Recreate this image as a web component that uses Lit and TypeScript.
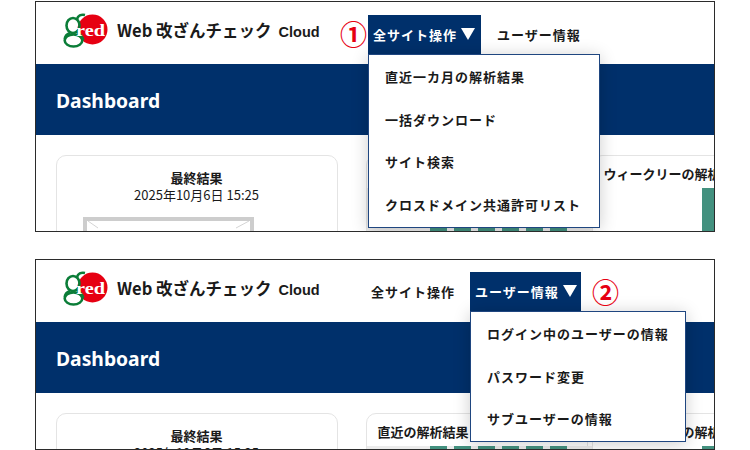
import { LitElement, html, css } from 'lit';
import { customElement, property } from 'lit/decorators.js';

const SITE_MENU = ['直近一カ月の解析結果', '一括ダウンロード', 'サイト検索', 'クロスドメイン共通許可リスト'];
const USER_MENU = ['ログイン中のユーザーの情報', 'パスワード変更', 'サブユーザーの情報'];

@customElement('site-panel')
export class SitePanel extends LitElement {
  static styles = css`
    :host {
      display: block;
    }

    .panel {
      position: relative;
      box-sizing: border-box;
      width: 680px;
      border: 1px solid #2b2b2b;
      background: #fff;
      overflow: hidden;
      color: #1a1a1a;
      font-family: 'Noto Sans CJK JP', 'Noto Sans', sans-serif;
    }

    .header {
      display: flex;
      align-items: flex-start;
      height: 62px;
      padding-left: 27px;
      box-sizing: border-box;
    }

    .logo {
      display: block;
      width: 46px;
      height: 36px;
      margin-top: 11px;
      flex: none;
    }

    .brand {
      margin: 16px 0 0 8px;
      font-size: 16.5px;
      line-height: 24px;
      font-weight: 700;
      white-space: nowrap;
      width: 251px;
    }

    .brand span {
      margin-left: 7px;
      font-family: 'Liberation Sans', sans-serif;
      font-size: 14.5px;
    }

    .nav {
      display: flex;
      margin-top: 13px;
    }

    .nav.user {
      margin: 12px 0 0 -2px;
    }

    .nav-item {
      position: relative;
      height: 39px;
      line-height: 39px;
      padding: 0 5px;
      font-size: 13px;
      letter-spacing: 1px;
      font-weight: 700;
      white-space: nowrap;
      box-sizing: border-box;
    }

    .nav-item.open {
      width: 113px;
      background: #00306b;
      color: #fff;
    }

    .nav.user .nav-item.open {
      width: 111px;
    }

    .nav-item.closed {
      width: 104px;
    }

    .nav-item.closed.second {
      padding-left: 16px;
    }

    .arrow {
      display: inline-block;
      width: 0;
      height: 0;
      margin-left: 4px;
      border-left: 7px solid transparent;
      border-right: 7px solid transparent;
      border-top: 12px solid #fff;
    }

    .menu {
      position: absolute;
      top: 39px;
      left: 0;
      z-index: 2;
      box-sizing: border-box;
      padding: 1px 16px 0;
      background: #fff;
      border: 1px solid #1f4680;
      box-shadow: 0 2px 16px rgba(0, 0, 0, 0.2);
      color: #1a1a1a;
    }

    .menu div {
      height: 42.7px;
      line-height: 42px;
      font-size: 13px;
      letter-spacing: 1px;
    }

    .mark {
      position: absolute;
      z-index: 3;
      top: 17px;
      font-size: 27px;
      line-height: 30px;
      font-weight: 700;
      color: #e60012;
    }

    .band {
      height: 71px;
      padding-left: 20px;
      background: #00306b;
      color: #fff;
      font-family: 'Noto Sans', sans-serif;
      font-size: 19.3px;
      line-height: 73px;
      font-weight: 700;
    }

    .content {
      display: flex;
      gap: 28px;
      padding: 20px 0 0 20px;
      height: 300px;
    }

    .card {
      flex: none;
      box-sizing: border-box;
      height: 300px;
      border: 1px solid #e4e4e4;
      border-radius: 10px;
      font-size: 13px;
      line-height: 17px;
    }

    .card.result {
      width: 282px;
      margin-left: -0.5px;
      padding-top: 13px;
      text-align: center;
    }

    .card.result b {
      display: block;
      font-weight: 700;
    }

    .card.recent {
      width: 222px;
      margin-right: -24px;
      padding: 9px 0 0 11px;
      font-weight: 700;
    }

    .card.weekly {
      width: 200px;
      padding: 9px 0 0 11px;
      font-weight: 700;
      white-space: nowrap;
    }

    .thumb {
      display: block;
      box-sizing: border-box;
      width: 171px;
      height: 80px;
      margin: 14px 0 0 26px;
      border: 4px solid #cdcdcd;
      background: #fff;
    }

    .bars {
      display: flex;
      gap: 7px;
      box-sizing: border-box;
      width: 226px;
      margin: 6px 0 0 -11px;
      padding-left: 63px;
      background: #ececec;
    }

    .bars i {
      display: block;
      width: 17px;
      height: 60px;
      background: #43917f;
    }

    .weekly-bar {
      width: 17px;
      height: 60px;
      margin: 6px 0 0 98px;
      background: #43917f;
    }
  `;

  @property({ type: Number }) height = 230;
  @property({ type: Number }) active = 0;

  private _renderNav(index: number, label: string, items: string[], width: number) {
    const open = this.active === index;
    return html`
      <div class="nav-item ${open ? 'open' : 'closed'} ${index === 1 ? 'second' : ''}">
        ${label}${open ? html`<span class="arrow"></span>` : ''}
        ${open
          ? html`<div class="menu" style="width:${width}px">${items.map((item) => html`<div>${item}</div>`)}</div>`
          : ''}
      </div>
    `;
  }

  render() {
    return html`
      <div class="panel" style="height:${this.height}px">
        <div class="header">
          <svg class="logo" viewBox="0 0 46 36">
            <circle cx="29.5" cy="16.5" r="15" fill="#e60012"></circle>
            <g fill="none" stroke="#0b7d38" stroke-width="2.6">
              <ellipse cx="10" cy="12.5" rx="6.5" ry="7.5"></ellipse>
              <ellipse cx="10.5" cy="27.5" rx="8.8" ry="6"></ellipse>
              <path d="M14 6c1-3 4-5 8-4M7 20c-3 1-5 3-5 6M14 19c3 2 6 4 6 8"></path>
            </g>
            <text x="13" y="23" fill="#fff" font-family="Liberation Serif, serif" font-size="16" font-weight="700"
              textLength="29" lengthAdjust="spacingAndGlyphs">red</text>
          </svg>
          <div class="brand">Web 改ざんチェック<span>Cloud</span></div>
          <div class="nav ${this.active === 1 ? 'user' : ''}">
            ${this._renderNav(0, '全サイト操作', SITE_MENU, 232)}
            ${this._renderNav(1, 'ユーザー情報', USER_MENU, 216)}
          </div>
        </div>
        <div class="band">Dashboard</div>
        <div class="content">
          <div class="card result">
            <b>最終結果</b>
            2025年10月6日 15:25
            <svg class="thumb" viewBox="0 0 163 72">
              <path d="M1 0l10 7M162 0l-13 7" fill="none" stroke="#d4d4d4"></path>
            </svg>
          </div>
          <div class="card recent">
            直近の解析結果
            <div class="bars"><i></i><i></i><i></i><i></i><i></i><i></i></div>
          </div>
          <div class="card weekly">
            ウィークリーの解析結果
            <div class="weekly-bar"></div>
          </div>
        </div>
        <div class="mark" style="left:${this.active === 0 ? 304 : 556}px">${this.active === 0 ? '①' : '②'}</div>
      </div>
    `;
  }
}

@customElement('app-root')
export class AppRoot extends LitElement {
  static styles = css`
    :host {
      display: block;
      width: 750px;
      height: 450px;
      overflow: hidden;
      background: #fff;
    }

    .page {
      display: flex;
      flex-direction: column;
      gap: 27px;
      padding: 1px 0 0 35px;
    }
  `;

  render() {
    return html`
      <div class="page">
        <site-panel .height=${231} .active=${0}></site-panel>
        <site-panel .height=${191} .active=${1}></site-panel>
      </div>
    `;
  }
}
